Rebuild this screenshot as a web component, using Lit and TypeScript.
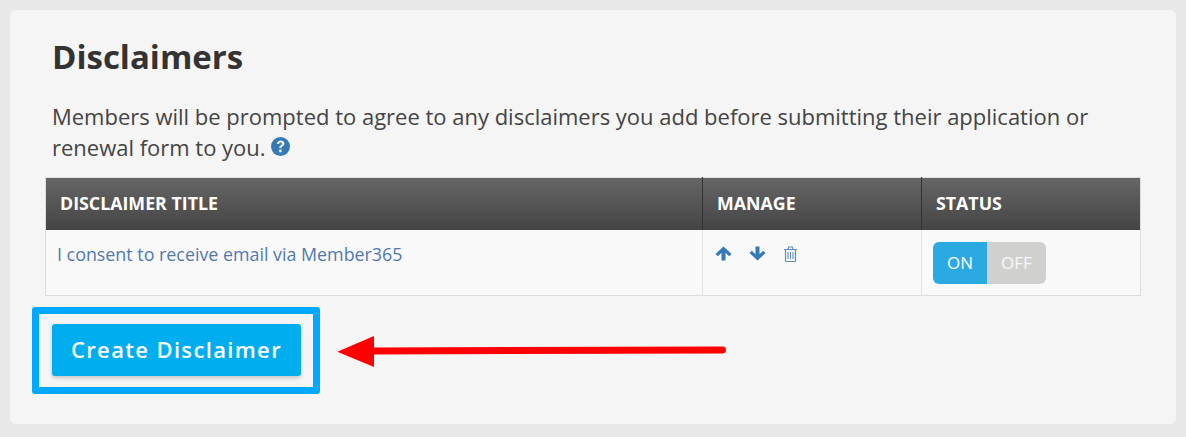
import { LitElement, html, css } from "lit";
import { customElement } from "lit/decorators.js";

@customElement("app-root")
export class AppRoot extends LitElement {
  static styles = css`
    :host {
      display: block;
      width: 1186px;
      height: 437px;
      box-sizing: border-box;
      padding: 10px;
      background: #e8e8e8;
      font-family: "Open Sans", sans-serif;
      color: #333;
      overflow: hidden;
    }
    .card {
      position: relative;
      box-sizing: border-box;
      height: 414px;
      width: 1166px;
      background: #f5f5f5;
      border-radius: 6px;
      padding: 27px 35px 0 35px;
    }
    h1 {
      margin: 0 0 0 7px;
      font-size: 33px;
      line-height: 40px;
      font-weight: 700;
      color: #333;
    }
    .intro {
      margin: 24px 0 0 7px;
      font-size: 21.99px;
      line-height: 31px;
      color: #444;
      width: 1060px;
    }
    .help {
      display: inline-block;
      vertical-align: 0;
      width: 19px;
      height: 19px;
    }
    .table {
      margin-top: 14px;
      width: 1096px;
      box-sizing: border-box;
      border: 1px solid #ddd;
      display: grid;
      grid-template-columns: 656px 219px 1fr;
    }
    .th {
      position: relative;
      height: 52px;
      box-sizing: border-box;
      padding: 0 0 2px 14px;
      display: flex;
      align-items: center;
      font-size: 17.8px;
      font-weight: 700;
      color: #fff;
      background: linear-gradient(#666, #444);
      border-left: 1px solid #333;
    }
    .th:first-child { border-left: none; }
    .th:not(:first-child)::before {
      content: "";
      position: absolute;
      left: -1px;
      top: -1px;
      width: 1px;
      height: 1px;
      background: #333;
    }
    .td {
      height: 65px;
      box-sizing: border-box;
      background: #f9f9f9;
      border-left: 1px solid #e2e2e2;
    }
    .td:nth-child(4) { border-left: none; }
    .title {
      padding: 12px 0 0 11px;
      font-size: 17.85px;
      line-height: 24px;
      color: #5079ad;
    }
    .manage {
      padding: 16px 0 0 11.5px;
      display: flex;
      align-items: flex-start;
      gap: 17px;
    }
    .manage svg { display: block; }
    .status { padding: 12px 0 0 11px; }
    .toggle {
      display: flex;
      width: 113px;
      height: 42px;
      border-radius: 6px;
      overflow: hidden;
      font-size: 17px;
      line-height: 42px;
      text-align: center;
      color: #fff;
    }
    .on { width: 54px; background: #2ba9e1; }
    .off { flex: 1; background: #d0d1cf; color: #f8f8f8; }
    .highlight {
      margin: 11px 0 0 -13px;
      width: 288px;
      height: 87px;
      box-sizing: border-box;
      border: 7px solid #00a8ff;
      border-radius: 3px;
      padding: 10px 0 0 13px;
    }
    button {
      display: block;
      width: 249px;
      height: 52px;
      padding: 0 0 2px;
      border: none;
      border-radius: 3px;
      background: #00aeef;
      color: #fff;
      font-family: "Open Sans", sans-serif;
      font-size: 22px;
      font-weight: 600;
      letter-spacing: 1.35px;
      box-shadow: 0 2px 4px rgba(0, 0, 0, 0.2);
    }
    .arrow {
      position: absolute;
      left: 327px;
      top: 325px;
      display: block;
    }
  `;

  render() {
    return html`
      <div class="card">
        <h1>Disclaimers</h1>
        <p class="intro">
          Members will be prompted to agree to any disclaimers you add before submitting their application or renewal form to you.
          <svg class="help" viewBox="0 0 19 19">
            <circle cx="9.5" cy="9.5" r="9.5" fill="#337ab7"></circle>
            <path d="M5.900 7.100c.1-2.300 1.700-3.600 3.800-3.600 2.100 0 3.700 1.300 3.700 3.100 0 1.300-.8 2.100-1.700 2.700-.8.5-1.100.9-1.100 1.700H8.300c0-1.500.6-2.200 1.500-2.800.8-.5 1.100-.9 1.100-1.500 0-.7-.5-1.200-1.300-1.200-.9 0-1.400.6-1.500 1.600z" fill="#f5f5f5"></path>
            <rect x="8.200" y="12.600" width="2.500" height="2.600" rx=".3" fill="#f5f5f5"></rect>
          </svg>
        </p>
        <div class="table">
          <div class="th">DISCLAIMER TITLE</div>
          <div class="th">MANAGE</div>
          <div class="th">STATUS</div>
          <div class="td title">I consent to receive email via Member365</div>
          <div class="td manage">
            <svg width="17" height="15" viewBox="0 0 17 15"><path d="M8.500 .5 16.500 8 14.200 10.300 10.500 6.800V14.500H6.500V6.800L2.800 10.300.5 8z" fill="#337ab7"></path></svg>
            <svg width="17" height="15" viewBox="0 0 17 15"><path d="M8.500 14.500 16.500 7 14.200 4.700 10.500 8.200V.5H6.500V8.200L2.800 4.700.5 7z" fill="#337ab7"></path></svg>
            <svg width="15" height="16" viewBox="0 0 15 16" fill="none" stroke="#5b8fc0" stroke-width="1.200"><path d="M1 3.500H14M2.500 3.500V14.500Q2.500 15.500 3.500 15.500H11.500Q12.500 15.500 12.500 14.500V3.500M5 3.500 5.700 1H9.300L10 3.500"></path><path d="M5 6V13M7.500 6V13M10 6V13" stroke-width="1.100"></path></svg>
          </div>
          <div class="td status">
            <div class="toggle"><div class="on">ON</div><div class="off">OFF</div></div>
          </div>
        </div>
        <div class="highlight"><button>Create Disclaimer</button></div>
        <svg class="arrow" width="390" height="34" viewBox="0 0 390 34">
          <path d="M36 16 385.500 15" stroke="#f00" stroke-width="7" stroke-linecap="round" fill="none"></path>
          <polygon points="0.300,16.700 37,1 37,32" fill="#f00"></polygon>
        </svg>
      </div>
    `;
  }
}
